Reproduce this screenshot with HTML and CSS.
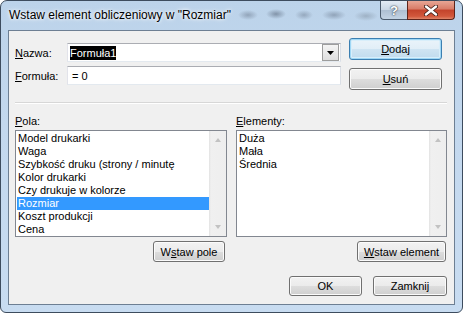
FILE: index.html
```html
<!DOCTYPE html>
<html lang="pl">
<head>
    <meta charset="UTF-8">
    <meta name="viewport" content="width=device-width, initial-scale=1.0">
    <title>Wstaw element obliczeniowy</title>
    <link rel="stylesheet" href="styles.css">
</head>
<body>
    <div class="window">
        <!-- Title bar with caption buttons -->
        <div class="titlebar">
            <span class="title">Wstaw element obliczeniowy w "Rozmiar"</span>
            <div class="caption-buttons">
                <div class="cap-btn help">?</div>
                <div class="cap-btn close">
                    <svg width="14" height="11" viewBox="0 0 14 11">
                        <path d="M2 1.5 L12 9.5 M12 1.5 L2 9.5" stroke="#3a1a14" stroke-width="4" stroke-linecap="round"/>
                        <path d="M2 1.5 L12 9.5 M12 1.5 L2 9.5" stroke="#ffffff" stroke-width="2.4" stroke-linecap="round"/>
                    </svg>
                </div>
            </div>
        </div>

        <div class="client">
            <!-- Name / formula fields -->
            <div class="top">
                <div class="fields">
                    <div class="field-row">
                        <label class="field-label"><u>N</u>azwa:</label>
                        <div class="combo">
                            <span class="combo-text"><span class="selected-text">Formuła1</span></span>
                            <span class="combo-arrow">
                                <svg width="7" height="4" viewBox="0 0 7 4"><path d="M0 0 H7 L3.5 4 Z" fill="#000"/></svg>
                            </span>
                        </div>
                    </div>
                    <div class="field-row">
                        <label class="field-label"><u>F</u>ormuła:</label>
                        <div class="textbox">= 0</div>
                    </div>
                </div>
                <div class="side-buttons">
                    <button class="btn btn-default"><u>D</u>odaj</button>
                    <button class="btn"><u>U</u>suń</button>
                </div>
            </div>

            <div class="separator"></div>

            <!-- Fields and items lists -->
            <div class="lists">
                <div class="list-column">
                    <label class="list-label"><u>P</u>ola:</label>
                    <div class="listbox">
                        <ul class="items">
                            <li>Model drukarki</li>
                            <li>Waga</li>
                            <li>Szybkość druku (strony / minutę</li>
                            <li>Kolor drukarki</li>
                            <li>Czy drukuje w kolorze</li>
                            <li class="selected">Rozmiar</li>
                            <li>Koszt produkcji</li>
                            <li>Cena</li>
                        </ul>
                        <div class="scrollbar">
                            <span class="arrow up"></span>
                            <span class="arrow down"></span>
                        </div>
                    </div>
                    <div class="list-actions left">
                        <button class="btn btn-insert-field">W<u>s</u>taw pole</button>
                    </div>
                </div>
                <div class="list-column">
                    <label class="list-label"><u>E</u>lementy:</label>
                    <div class="listbox">
                        <ul class="items">
                            <li>Duża</li>
                            <li>Mała</li>
                            <li>Średnia</li>
                        </ul>
                        <div class="scrollbar">
                            <span class="arrow up"></span>
                            <span class="arrow down"></span>
                        </div>
                    </div>
                    <div class="list-actions right">
                        <button class="btn btn-insert-item"><u>W</u>staw element</button>
                    </div>
                </div>
            </div>

            <!-- Dialog buttons -->
            <div class="dialog-buttons">
                <button class="btn btn-ok">OK</button>
                <button class="btn btn-close">Zamknij</button>
            </div>
        </div>
    </div>
</body>
</html>
```

FILE: styles.css
```css
/* Basic page */
body {
    margin: 0;
    padding: 0;
    background-color: #ffffff;
    font-family: "Liberation Sans", Arial, sans-serif;
    font-size: 11px;
    color: #000;
}

/* Aero window frame */
.window {
    width: 463px;
    height: 313px;
    box-sizing: border-box;
    border: 1px solid #3d4c5e;
    border-radius: 7px 7px 6px 6px;
    padding: 0 7px 7px;
    display: flex;
    flex-direction: column;
    overflow: hidden;
    background: linear-gradient(#bcd3ea, #c3d8ee 40%, #c8dcf1);
}

.titlebar {
    height: 29px;
    display: flex;
    justify-content: space-between;
    align-items: flex-start;
    background:
        radial-gradient(ellipse 10px 5px at 240px 14px, rgba(110, 125, 145, 0.55), transparent),
        radial-gradient(ellipse 10px 5px at 268px 13px, rgba(90, 105, 125, 0.6), transparent),
        radial-gradient(ellipse 9px 5px at 296px 14px, rgba(110, 125, 145, 0.5), transparent),
        radial-gradient(ellipse 12px 5px at 326px 14px, rgba(100, 115, 135, 0.5), transparent),
        radial-gradient(ellipse 12px 5px at 358px 15px, rgba(120, 135, 150, 0.45), transparent);
}

.title {
    padding: 7px 0 0 1px;
    font-size: 12px;
    line-height: 14px;
    color: #000;
    text-shadow: 0 0 5px #ffffff, 0 0 3px #ffffff;
}

.caption-buttons {
    display: flex;
}

.cap-btn {
    height: 19px;
    box-sizing: border-box;
    border: 1px solid #4b5a6c;
    border-top: none;
    display: flex;
    align-items: center;
    justify-content: center;
}

.help {
    width: 27px;
    border-right: none;
    border-radius: 0 0 0 4px;
    background: linear-gradient(#e3ebf4, #c9d6e4 50%, #aebfd2 51%, #c3d3e4);
    color: #fff;
    font-weight: bold;
    font-size: 13px;
    text-shadow: 0 0 1px #34404f, 0 0 2px #34404f;
}

.close {
    width: 48px;
    border-color: #5e241a;
    border-radius: 0 0 4px 0;
    background: linear-gradient(#e8a695, #d87b67 45%, #c3432b 50%, #d2583c 85%, #e0866a);
}

/* Client area */
.client {
    flex: 1;
    border: 1px solid #6d7f93;
    background-color: #f0f0f0;
    padding: 0 7px 0 6px;
}

.top {
    display: flex;
    align-items: flex-start;
}

.fields {
    margin-top: 12px;
    width: 326px;
    display: flex;
    flex-direction: column;
    gap: 4px;
}

.field-row {
    display: flex;
    align-items: center;
}

.field-label {
    width: 52px;
}

.combo,
.textbox {
    width: 274px;
    height: 19px;
    box-sizing: border-box;
    border: 1px solid;
    border-color: #abadb3 #dbdfe6 #e3e9ef #e2e3ea;
    background-color: #fff;
    display: flex;
    align-items: center;
}

.combo-text {
    flex: 1;
    padding-left: 2px;
}

.selected-text {
    background-color: #000;
    color: #fff;
    padding: 1px 0;
}

.combo-arrow {
    width: 17px;
    height: 17px;
    box-sizing: border-box;
    border: 1px solid #9d9d9d;
    background: linear-gradient(#f4f4f4, #dedede);
    display: flex;
    align-items: center;
    justify-content: center;
    margin-right: 1px;
}

.textbox {
    padding-left: 4px;
}

.side-buttons {
    margin: 7px 0 0 8px;
    width: 93px;
    display: flex;
    flex-direction: column;
    gap: 8px;
}

/* Win7 style push buttons */
.btn {
    box-sizing: border-box;
    height: 22px;
    padding: 0;
    border: 1px solid #707070;
    border-radius: 3px;
    background: linear-gradient(#f2f2f2, #ebebeb 50%, #dddddd 51%, #cfcfcf);
    box-shadow: inset 0 0 0 1px #fbfbfb;
    font-family: inherit;
    font-size: 11px;
    color: #000;
}

.btn-default {
    border-color: #3c7fb1;
    box-shadow: inset 0 0 0 1px #9fd7f5, inset 0 0 0 2px #d8eefa;
    background: linear-gradient(#eaf4fa, #e1eef7 50%, #cfe4f2 51%, #c0dbee);
}

.separator {
    margin: 12px 0 0 0;
    border-top: 1px solid #d7d7d7;
    border-bottom: 1px solid #ffffff;
}

/* Lists */
.lists {
    margin-top: 11px;
    display: flex;
    gap: 9px;
}

.list-column {
    display: flex;
    flex-direction: column;
}

.list-column:first-child {
    width: 212px;
}

.list-column:last-child {
    width: 211px;
}

.list-label {
    line-height: 13px;
    margin-bottom: 2px;
}

.listbox {
    height: 107px;
    box-sizing: border-box;
    border: 1px solid #828790;
    background-color: #fff;
    display: flex;
}

.items {
    flex: 1;
    list-style: none;
    margin: 0;
    padding: 1px 0 0 1px;
    overflow: hidden;
}

.items li {
    line-height: 13px;
    height: 13px;
    padding-left: 1px;
    white-space: nowrap;
}

.items li.selected {
    background-color: #3399ff;
    color: #fff;
}

.scrollbar {
    width: 17px;
    background: linear-gradient(to right, #e2e2e2, #f0f0f0 2px, #eeeeee);
    display: flex;
    flex-direction: column;
    justify-content: space-between;
    align-items: center;
    padding: 7px 0;
    box-sizing: border-box;
}

.arrow {
    width: 0;
    height: 0;
    border-left: 3.5px solid transparent;
    border-right: 3.5px solid transparent;
}

.arrow.up {
    border-bottom: 4px solid #c2c2c2;
}

.arrow.down {
    border-top: 4px solid #c2c2c2;
}

.list-actions {
    margin-top: 4px;
    display: flex;
    justify-content: flex-end;
}

.list-actions.left {
    padding-right: 2px;
}

.list-actions.right {
    padding-right: 1px;
}

.btn-insert-field {
    width: 72px;
    height: 21px;
}

.btn-insert-item {
    width: 89px;
    height: 21px;
}

.dialog-buttons {
    margin-top: 14px;
    display: flex;
    justify-content: flex-end;
    gap: 11px;
}

.btn-ok {
    width: 73px;
    height: 20px;
}

.btn-close {
    width: 74px;
    height: 20px;
}
```
